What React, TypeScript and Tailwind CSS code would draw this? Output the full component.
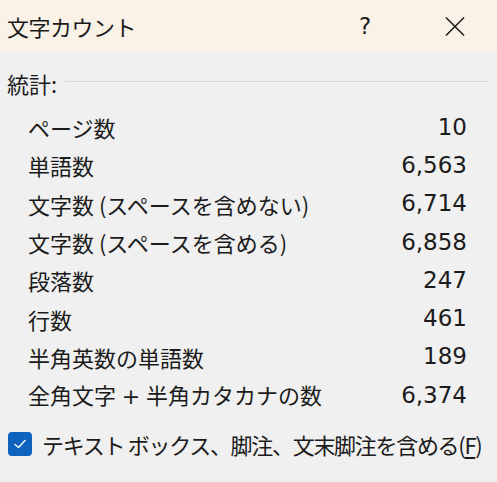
import React from "react";

const rows: [React.ReactNode, string][] = [
  ["ページ数", "10"],
  ["単語数", "6,563"],
  ["文字数 (スペースを含めない)", "6,714"],
  ["文字数 (スペースを含める)", "6,858"],
  ["段落数", "247"],
  ["行数", "461"],
  ["半角英数の単語数", "189"],
  [
    <>
      全角文字
      <span className="inline-block w-[30px] text-center" style={{ fontFamily: '"DejaVu Sans", sans-serif' }}>+</span>
      半角カタカナの数
    </>,
    "6,374",
  ],
];

export default function App() {
  return (
    <div
      className="w-[497px] h-[482px] flex flex-col bg-[#f0f0f0] text-[#1b1b1b] overflow-hidden"
      style={{ fontFamily: '"Noto Sans CJK JP", "Noto Sans", sans-serif' }}
    >
      <div className="h-[52px] shrink-0 bg-[#faf2e7] flex items-center pl-[7px]">
        <div className="text-[22px] leading-none flex-1 tracking-[-0.5px]">文字カウント</div>
        <div className="w-[20px] flex justify-center text-[23px] leading-none mr-[70px]" style={{ fontFamily: '"DejaVu Sans", sans-serif' }}>?</div>
        <div className="w-[20px] h-[20px] mr-[32px] flex items-center justify-center">
          <svg width="21" height="21" viewBox="0 0 21 21">
            <path d="M1 1 L20 20 M20 1 L1 20" stroke="#1b1b1b" strokeWidth="1.6" fill="none" />
          </svg>
        </div>
      </div>
      <div className="flex items-center pl-[7px] pr-[9px] mt-[17px] h-[28px]">
        <span className="text-[22px] leading-none">統計:</span>
        <div className="flex-1 h-px bg-[#d9d9d9] ml-[8px] mt-[-3px]" />
      </div>
      <div className="flex flex-col pl-[28px] pr-[30px] mt-[11px]">
        {rows.map(([label, value], i) => (
          <div key={i} className="h-[38.3px] flex items-center justify-between">
            <span className="text-[22px] leading-none whitespace-pre">{label}</span>
            <span className="text-[23px] leading-none" style={{ fontFamily: '"DejaVu Sans", sans-serif' }}>{value}</span>
          </div>
        ))}
      </div>
      <div className="flex items-center pl-[8px] mt-[18px]">
        <div className="w-[24px] h-[24px] shrink-0 rounded-[4px] bg-[#0f62be] flex items-center justify-center">
          <svg width="14" height="14" viewBox="0 0 14 14">
            <path d="M2 7.5 L5.5 10.5 L12 3.5" stroke="#ffffff" strokeWidth="1.4" fill="none" strokeLinecap="round" strokeLinejoin="round" />
          </svg>
        </div>
        <span className="text-[22px] leading-none ml-[10px] whitespace-nowrap tracking-[-1.3px]">
          テキスト ボックス、脚注、文末脚注を含める(<span className="underline underline-offset-[3px]">F</span>)
        </span>
      </div>
    </div>
  );
}
